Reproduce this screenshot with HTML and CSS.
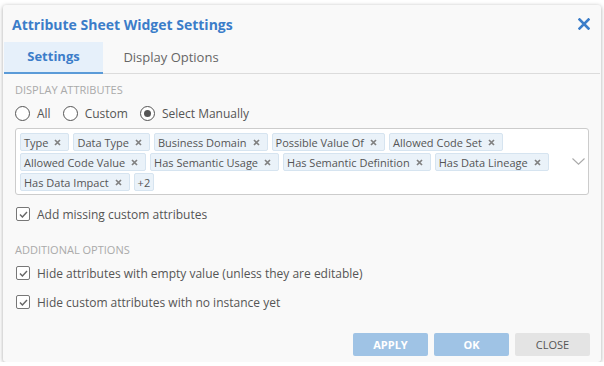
FILE: index.html
```html
<!DOCTYPE html>
<html>
<head>
<meta charset="utf-8">
<link rel="stylesheet" href="styles.css">
</head>
<body>
<div class="dialog">
  <div class="header">
    <h1 class="title">Attribute Sheet Widget Settings</h1>
    <svg class="close-x" width="12" height="12" viewBox="0 0 12 12"><path d="M1.5 1.5 L10.5 10.5 M10.5 1.5 L1.5 10.5" stroke="#3b7dc9" stroke-width="2.6" stroke-linecap="square"/></svg>
  </div>
  <div class="tabs">
    <div class="tab active">Settings</div>
    <div class="tab">Display Options</div>
  </div>
  <div class="body">
    <div class="section-label">DISPLAY ATTRIBUTES</div>
    <div class="radios">
      <label class="radio"><span class="circle"></span>All</label>
      <label class="radio"><span class="circle"></span>Custom</label>
      <label class="radio"><span class="circle checked"></span>Select Manually</label>
    </div>
    <div class="tagbox">
      <div class="tags">
        <span class="tag">Type<svg class="tx" width="7" height="7" viewBox="0 0 7 7"><path d="M1 1 L6 6 M6 1 L1 6" stroke="#808080" stroke-width="1.7"/></svg></span>
        <span class="tag">Data Type<svg class="tx" width="7" height="7" viewBox="0 0 7 7"><path d="M1 1 L6 6 M6 1 L1 6" stroke="#808080" stroke-width="1.7"/></svg></span>
        <span class="tag">Business Domain<svg class="tx" width="7" height="7" viewBox="0 0 7 7"><path d="M1 1 L6 6 M6 1 L1 6" stroke="#808080" stroke-width="1.7"/></svg></span>
        <span class="tag">Possible Value Of<svg class="tx" width="7" height="7" viewBox="0 0 7 7"><path d="M1 1 L6 6 M6 1 L1 6" stroke="#808080" stroke-width="1.7"/></svg></span>
        <span class="tag">Allowed Code Set<svg class="tx" width="7" height="7" viewBox="0 0 7 7"><path d="M1 1 L6 6 M6 1 L1 6" stroke="#808080" stroke-width="1.7"/></svg></span>
        <span class="tag">Allowed Code Value<svg class="tx" width="7" height="7" viewBox="0 0 7 7"><path d="M1 1 L6 6 M6 1 L1 6" stroke="#808080" stroke-width="1.7"/></svg></span>
        <span class="tag">Has Semantic Usage<svg class="tx" width="7" height="7" viewBox="0 0 7 7"><path d="M1 1 L6 6 M6 1 L1 6" stroke="#808080" stroke-width="1.7"/></svg></span>
        <span class="tag">Has Semantic Definition<svg class="tx" width="7" height="7" viewBox="0 0 7 7"><path d="M1 1 L6 6 M6 1 L1 6" stroke="#808080" stroke-width="1.7"/></svg></span>
        <span class="tag">Has Data Lineage<svg class="tx" width="7" height="7" viewBox="0 0 7 7"><path d="M1 1 L6 6 M6 1 L1 6" stroke="#808080" stroke-width="1.7"/></svg></span>
        <span class="tag">Has Data Impact<svg class="tx" width="7" height="7" viewBox="0 0 7 7"><path d="M1 1 L6 6 M6 1 L1 6" stroke="#808080" stroke-width="1.7"/></svg></span>
        <span class="tag more">+2</span>
      </div>
      <svg class="chev" width="13" height="7" viewBox="0 0 13 7"><path d="M0.5 0.5 L6.5 6.2 L12.5 0.5" fill="none" stroke="#aaa" stroke-width="1.1"/></svg>
    </div>
    <label class="check first"><span class="box"><svg width="9" height="7" viewBox="0 0 9 7"><path d="M1 3.5 L3.4 6 L8 1" fill="none" stroke="#666" stroke-width="1.4"/></svg></span>Add missing custom attributes</label>
    <div class="section-label second">ADDITIONAL OPTIONS</div>
    <label class="check"><span class="box"><svg width="9" height="7" viewBox="0 0 9 7"><path d="M1 3.5 L3.4 6 L8 1" fill="none" stroke="#666" stroke-width="1.4"/></svg></span>Hide attributes with empty value (unless they are editable)</label>
    <label class="check"><span class="box"><svg width="9" height="7" viewBox="0 0 9 7"><path d="M1 3.5 L3.4 6 L8 1" fill="none" stroke="#666" stroke-width="1.4"/></svg></span>Hide custom attributes with no instance yet</label>
  </div>
  <div class="footer">
    <button class="btn primary">APPLY</button>
    <button class="btn primary">OK</button>
    <button class="btn secondary">CLOSE</button>
  </div>
</div>
</body>
</html>
```
FILE: styles.css
```css
* { box-sizing: border-box; }
html, body { margin: 0; padding: 0; background: #ffffff; }
body {
  font-family: "Open Sans", "Noto Sans", sans-serif;
  font-size: 12px;
  color: #555;
  padding: 5px 3px 0 3px;
}
.dialog {
  width: 598px;
  height: 357px;
  background: #f9f9f9;
  border-radius: 3px;
  box-shadow: 0 1px 4px rgba(0,0,0,0.35);
  display: flex;
  flex-direction: column;
}
.header {
  height: 37px;
  display: flex;
  align-items: center;
  justify-content: space-between;
  padding: 0 11px 0 9px;
}
.title {
  margin: 0;
  font-size: 14px;
  font-weight: 700;
  color: #3b7dc9;
  padding-top: 2px;
}
.close-x { display: block; margin-top: 1px; }
.tabs {
  display: flex;
  border-bottom: 1px solid #dcdcdc;
  margin: 0 1px;
  height: 32px;
}
.tab {
  width: 99px;
  height: 31px;
  display: flex;
  align-items: center;
  justify-content: center;
  font-size: 13px;
  color: #666;
  padding-bottom: 2px;
}
.tab + .tab { width: 136px; }
.tab.active {
  background: #e6f0fa;
  color: #3b7dc9;
  font-weight: 700;
  border-bottom: 2px solid #5b9bd8;
  height: 32px;
  margin-bottom: -1px;
}
.body {
  flex: 1;
  padding: 9px 12px 0 12px;
}
.section-label {
  font-size: 11px;
  color: #aaa;
  line-height: 14px;
}
.section-label.second { margin-top: 19px; }
.radios {
  display: flex;
  margin-top: 5px;
  height: 22px;
  align-items: center;
}
.radio {
  display: flex;
  align-items: center;
  gap: 7px;
  font-size: 12px;
  color: #555;
  margin-right: 12px;
}
.circle {
  width: 15px;
  height: 15px;
  border: 1.5px solid #555;
  border-radius: 50%;
  background: #fff;
  display: inline-flex;
  align-items: center;
  justify-content: center;
}
.circle.checked::after {
  content: "";
  width: 7px;
  height: 7px;
  border-radius: 50%;
  background: #555;
}
.tagbox {
  margin-top: 4px;
  height: 67px;
  background: #fff;
  border: 1px solid #ccc;
  border-radius: 3px;
  display: flex;
  align-items: center;
  padding: 4px 0 4px 4px;
}
.tags {
  flex: 1;
  display: flex;
  flex-wrap: wrap;
  gap: 2px 4px;
  align-self: flex-start;
  padding-right: 8px;
}
.tag {
  height: 18px;
  background: #eaf2f9;
  border: 1px solid #d6e4f0;
  border-radius: 2px;
  display: inline-flex;
  align-items: center;
  padding: 0 7px 0 3px;
  font-size: 11px;
  color: #555;
  white-space: nowrap;
}
.tag.more { padding: 0 3px; }
.tx { display: block; margin-left: 6px; }
.chev { margin-right: 3px; flex: none; }
.check {
  display: flex;
  align-items: center;
  gap: 7px;
  font-size: 12px;
  color: #555;
  height: 20px;
  margin-left: 1px;
}
.check.first { margin-top: 9px; }
.check + .check { margin-top: 9px; }
.section-label + .check { margin-top: 6px; }
.box {
  width: 14px;
  height: 14px;
  border: 1.5px solid #777;
  border-radius: 2px;
  display: inline-flex;
  align-items: center;
  justify-content: center;
  background: #fff;
}
.box svg { display: block; }
.footer {
  display: flex;
  justify-content: flex-end;
  gap: 6px;
  padding: 0 11px 6px 0;
}
.btn {
  width: 75px;
  height: 23px;
  border: none;
  border-radius: 2px;
  font-family: "Open Sans", "Noto Sans", sans-serif;
  font-size: 11px;
  padding: 0;
}
.btn.primary { background: #9fc3e5; color: #fff; font-weight: 700; }
.btn.secondary { background: #e4e4e4; color: #555; }
```
